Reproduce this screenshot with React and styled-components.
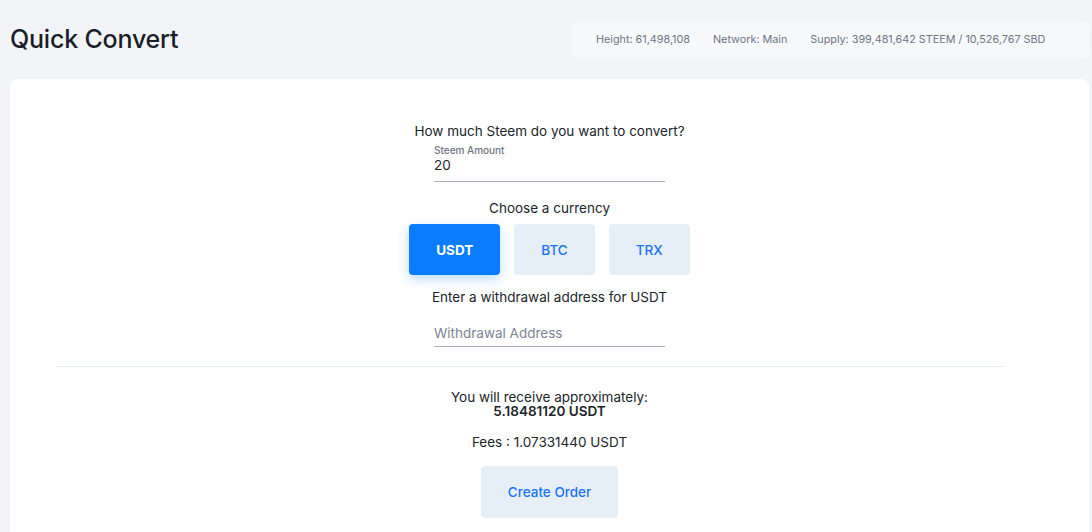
import React, { useState } from "react";
import styled, { createGlobalStyle, css } from "styled-components";

const GlobalStyle = createGlobalStyle`
  html, body {
    margin: 0;
    padding: 0;
    background: #f3f4f8;
    font-family: Inter, "Noto Sans", "Liberation Sans", sans-serif;
    color: #212529;
  }
  * {
    box-sizing: border-box;
  }
`;

const currencies = ["USDT", "BTC", "TRX"];

function QuickConvert() {
  const [currency, setCurrency] = useState("USDT");
  const [amount, setAmount] = useState("20");
  const [address, setAddress] = useState("");

  return (
    <Page>
      <GlobalStyle />
      <Header>
        <Title>Quick Convert</Title>
        <Stats>
          <Stat>Height: 61,498,108</Stat>
          <Stat>Network: Main</Stat>
          <Stat>Supply: 399,481,642 STEEM / 10,526,767 SBD</Stat>
        </Stats>
      </Header>

      <Card>
        <Prompt>How much Steem do you want to convert?</Prompt>
        <Field>
          <FieldLabel>Steem Amount</FieldLabel>
          <Input value={amount} onChange={e => setAmount(e.target.value)} />
        </Field>

        <Prompt $gap={16}>Choose a currency</Prompt>
        <CurrencyRow>
          {currencies.map(c => (
            <CurrencyButton
              key={c}
              $active={c === currency}
              onClick={() => setCurrency(c)}
            >
              {c}
            </CurrencyButton>
          ))}
        </CurrencyRow>

        <Prompt $gap={12}>Enter a withdrawal address for {currency}</Prompt>
        <Field $gap={14}>
          <Input
            $top={3}
            $bottom={4}
            placeholder="Withdrawal Address"
            value={address}
            onChange={e => setAddress(e.target.value)}
          />
        </Field>

        <Divider />

        <Receive>
          <span>You will receive approximately:</span>
          <strong>5.18481120 {currency}</strong>
        </Receive>
        <Prompt $gap={14}>Fees : 1.07331440 {currency}</Prompt>
        <OrderButton>Create Order</OrderButton>
      </Card>
    </Page>
  );
}

const Page = styled.div`
  min-height: 100vh;
  padding: 0 3px 0 10px;
`;

const Header = styled.div`
  display: flex;
  align-items: center;
  justify-content: space-between;
  height: 79px;
  padding-bottom: 2px;
`;

const Title = styled.h1`
  margin: 0;
  font-size: 25px;
  font-weight: 500;
  color: #1b1e28;
  letter-spacing: -0.2px;
`;

const Stats = styled.div`
  display: flex;
  align-items: center;
  gap: 23px;
  height: 34px;
  width: 517px;
  padding: 0 24px;
  margin-top: 2px;
  background: #f8f9fd;
  border-radius: 4px;
`;

const Stat = styled.span`
  font-size: 10.8px;
  color: #6e7583;
  white-space: nowrap;
`;

const Card = styled.div`
  display: flex;
  flex-direction: column;
  align-items: center;
  background: #ffffff;
  border-radius: 8px;
  padding: 42px 45px 40px;
  min-height: 480px;
`;

const Prompt = styled.div`
  font-size: 13.5px;
  line-height: 20px;
  color: #212529;
  margin-top: ${({ $gap }) => $gap || 0}px;
`;

const Field = styled.div`
  display: flex;
  flex-direction: column;
  width: 231px;
  margin-top: ${({ $gap }) => $gap || 3}px;
`;

const FieldLabel = styled.label`
  font-size: 10px;
  line-height: 12px;
  font-weight: 500;
  color: #6e7583;
`;

const Input = styled.input`
  border: none;
  border-bottom: 1px solid #a7b1bf;
  outline: none;
  background: transparent;
  font-family: inherit;
  font-size: 13.5px;
  line-height: 18px;
  color: #212529;
  padding: ${({ $top }) => $top || 0}px 0 ${({ $bottom }) => $bottom ?? 7}px;

  &::placeholder {
    color: #7d8593;
  }
`;

const CurrencyRow = styled.div`
  display: flex;
  gap: 14px;
  margin-top: 6px;
`;

const CurrencyButton = styled.button`
  height: 51px;
  padding: 0 27px;
  border: none;
  border-radius: 4px;
  font-family: inherit;
  font-size: 13.5px;
  font-weight: 500;
  cursor: pointer;
  background: #e6eef8;
  color: #1a73ff;

  ${({ $active }) =>
    $active &&
    css`
      background: #0a7cff;
      color: #ffffff;
      font-weight: 700;
      box-shadow: 0 4px 12px rgba(10, 124, 255, 0.28);
    `}
`;

const Divider = styled.hr`
  align-self: flex-start;
  width: 950px;
  border: none;
  border-top: 1px solid #e8ecf8;
  margin: 19px 0 0;
`;

const Receive = styled.div`
  display: flex;
  flex-direction: column;
  align-items: center;
  margin-top: 23px;
  font-size: 13.5px;
  line-height: 14px;
  color: #212529;

  strong {
    font-weight: 600;
  }
`;

const OrderButton = styled.button`
  margin-top: 14px;
  width: 137px;
  height: 52px;
  border: none;
  border-radius: 4px;
  background: #e6eef8;
  color: #1a73ff;
  font-family: inherit;
  font-size: 13.5px;
  font-weight: 500;
  cursor: pointer;
`;

export default QuickConvert;
